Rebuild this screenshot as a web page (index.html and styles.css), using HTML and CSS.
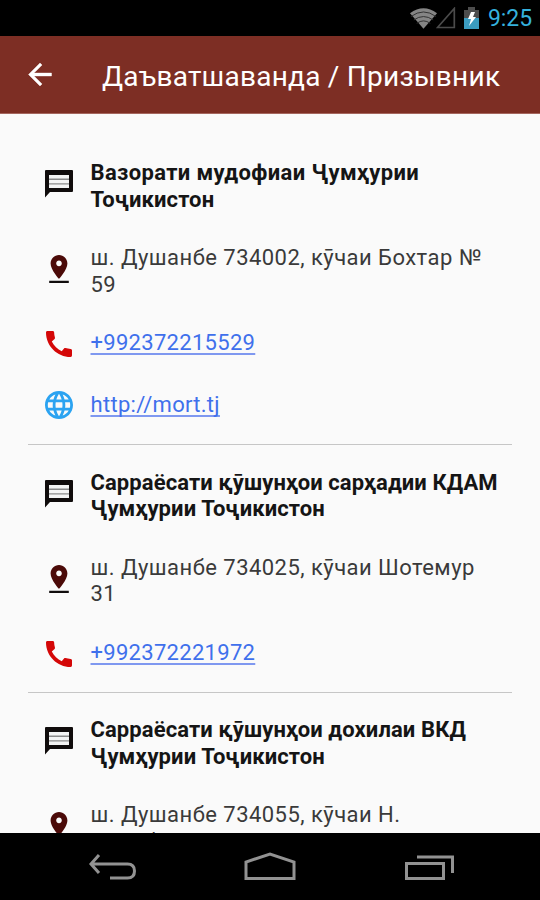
FILE: index.html
```
<!DOCTYPE html>
<html lang="tg">
<head>
<meta charset="utf-8">
<title>Даъватшаванда / Призывник</title>
<link rel="stylesheet" href="styles.css">
</head>
<body>
<svg class="defs" aria-hidden="true">
  <symbol id="message" viewBox="0 0 28 28"><path d="M1 0h26q1 0 1 1v20q0 1-1 1H5l-5 5.500V1q0-1 1-1z"/><path class="lines" d="M4 5h20v13H4z"/><path class="rules" d="M4 8.600h20v1.400H4zM4 13.200h20v1.400H4z"/></symbol>
  <symbol id="pin" viewBox="5 2 14 20"><path class="pin-mark" d="M18 8c0-3.310-2.690-6-6-6S6 4.690 6 8c0 4.500 6 11 6 11s6-6.500 6-11zm-8 0c0-1.100.9-2 2-2s2 .9 2 2-.89 2-2 2-2-.9-2-2z"/><path d="M5 20.400h14V22H5z"/></symbol>
  <symbol id="phone" viewBox="3 3 18 18"><path d="M20.010 15.380c-1.230 0-2.420-.2-3.530-.56-.35-.12-.74-.03-1.010.24l-1.570 1.970c-2.830-1.350-5.480-3.900-6.890-6.830l1.950-1.660c.27-.28.35-.67.24-1.020-.37-1.110-.56-2.300-.56-3.530 0-.54-.45-.99-.99-.99H4.190C3.650 3 3 3.240 3 3.990 3 13.280 10.730 21 20.010 21c.71 0 .99-.63.99-1.180v-3.450c0-.54-.45-.99-.99-.99z"/></symbol>
  <symbol id="globe" viewBox="2 2 20 20"><path d="M11.990 2C6.470 2 2 6.480 2 12s4.470 10 9.990 10C17.520 22 22 17.520 22 12S17.520 2 11.990 2zm6.930 6h-2.950c-.32-1.250-.78-2.450-1.380-3.560 1.840.63 3.370 1.910 4.330 3.560zM12 4.040c.83 1.200 1.480 2.530 1.910 3.960h-3.820c.43-1.430 1.080-2.760 1.910-3.960zM4.260 14C4.100 13.360 4 12.690 4 12s.1-1.360.26-2h3.380c-.08.66-.14 1.320-.14 2s.06 1.340.14 2H4.260zm.82 2h2.950c.32 1.250.78 2.450 1.380 3.560-1.840-.63-3.370-1.900-4.330-3.560zm2.950-8H5.080c.96-1.660 2.490-2.930 4.330-3.560C8.810 5.550 8.350 6.750 8.030 8zM12 19.960c-.83-1.200-1.480-2.530-1.910-3.960h3.820c-.43 1.430-1.080 2.760-1.910 3.960zM14.340 14H9.660c-.09-.66-.16-1.320-.16-2s.07-1.350.16-2h4.680c.09.65.16 1.320.16 2s-.07 1.340-.16 2zm.25 5.560c.6-1.110 1.060-2.310 1.380-3.560h2.950c-.96 1.650-2.490 2.930-4.330 3.560zM16.360 14c.08-.66.14-1.320.14-2s-.06-1.340-.14-2h3.380c.16.64.26 1.310.26 2s-.1 1.360-.26 2h-3.380z"/></symbol>
</svg>

<div class="screen">
  <div class="status">
    <svg class="wifi" viewBox="0 0 30 22"><path class="wedge" d="M1 6Q15-4 29 6L15 22z"/><path class="arcs" d="M2 9.500Q15 0 28 9.500M5 13q10-7 20 0M8 16.500q7-5 14 0"/></svg>
    <svg class="signal" viewBox="0 0 20 22"><path d="M18.300 1.500V20.500H1.500z"/></svg>
    <svg class="battery" viewBox="0 0 16 22"><path class="empty" d="M4 0h7v3h4v9H0V3h4z"/><path class="charge" d="M0 11h15v11H0z"/><path class="bolt" d="M7 5h4L9 10h3l-7 9 2-7H4z"/></svg>
    <span class="clock">9:25</span>
  </div>

  <header class="bar">
    <svg class="back" viewBox="4 4 16 16"><path d="M20 11H7.830l5.590-5.590L12 4l-8 8 8 8 1.410-1.410L7.830 13H20v-2z"/></svg>
    <h1 class="bar-title">Даъватшаванда / Призывник</h1>
  </header>

  <main class="list">
    <section class="group">
      <div class="row name"><svg class="icon message"><use href="#message"/></svg><p class="text"><span class="wide">Вазорати мудофиаи Ҷумҳурии</span><br>Тоҷикистон</p></div>
      <div class="row address"><svg class="icon pin"><use href="#pin"/></svg><p class="text">ш. Душанбе 734002, кӯчаи Бохтар №<br>59</p></div>
      <div class="row link"><svg class="icon phone"><use href="#phone"/></svg><p class="text"><a href="tel:+992372215529">+992372215529</a></p></div>
      <div class="row link"><svg class="icon globe"><use href="#globe"/></svg><p class="text"><a class="site" href="http://mort.tj">http://mort.tj</a></p></div>
    </section>
    <section class="group">
      <div class="row name"><svg class="icon message"><use href="#message"/></svg><p class="text">Сарраёсати қӯшунҳои сарҳадии КДАМ<br>Ҷумҳурии Тоҷикистон</p></div>
      <div class="row address"><svg class="icon pin"><use href="#pin"/></svg><p class="text">ш. Душанбе 734025, кӯчаи Шотемур<br>31</p></div>
      <div class="row link"><svg class="icon phone"><use href="#phone"/></svg><p class="text"><a href="tel:+992372221972">+992372221972</a></p></div>
    </section>
    <section class="group">
      <div class="row name"><svg class="icon message"><use href="#message"/></svg><p class="text">Сарраёсати қӯшунҳои дохилаи ВКД<br>Ҷумҳурии Тоҷикистон</p></div>
      <div class="row address"><svg class="icon pin"><use href="#pin"/></svg><p class="text">ш. Душанбе 734055, кӯчаи Н.<br>Қарабоев</p></div>
    </section>
  </main>

  <nav class="nav">
    <svg class="nav-icon" viewBox="0 0 52 32"><path d="M12 3L4 12l8 9M4 12h36.500q7 0 7 7t-7 7H23"/></svg>
    <svg class="nav-icon" viewBox="0 0 52 32"><path d="M2 26.500V10L26 2l24 8v16.500z"/></svg>
    <svg class="nav-icon" viewBox="0 0 52 32"><path d="M2.500 11.500h37v15h-37zM13 5h35.500v16"/></svg>
  </nav>
</div>
</body>
</html>
```
FILE: styles.css
```
* { box-sizing: border-box; }
body { margin: 0; font-family: Roboto, "Noto Sans", sans-serif; }
h1, p { margin: 0; }
.defs { display: none; }
.screen {
  width: 540px;
  height: 900px;
  display: flex;
  flex-direction: column;
  overflow: hidden;
  background: #fafafa;
}

.status {
  flex: none;
  height: 36px;
  padding: 0 8px 0 0;
  display: flex;
  align-items: center;
  justify-content: flex-end;
  background: #000;
}
.wifi { width: 29px; height: 22px; margin-right: -2px; }
.wedge { fill: #858585; }
.arcs { fill: none; stroke: #303030; stroke-width: 1; }
.signal { width: 20px; height: 22px; margin-right: 8px; }
.signal path { fill: none; stroke: #4b4b4b; stroke-width: 1.7; }
.battery { width: 16px; height: 22px; margin-right: 8px; }
.empty { fill: #4d4d4d; }
.charge { fill: #3b9cc0; }
.bolt { fill: #fff; }
.clock { font-size: 23px; line-height: 34px; padding-top: 2px; color: #35b1dd; letter-spacing: -.1px; }

.bar {
  flex: none;
  height: 78px;
  padding-left: 28px;
  display: flex;
  align-items: center;
  background: #7d2e24;
  border-bottom: 1px solid #a4665e;
}
.back { width: 24px; height: 23px; margin-right: 50px; fill: #fff; stroke: #fff; stroke-width: .3; }
.bar-title { font-size: 28px; line-height: 36px; font-weight: 400; color: #fff; white-space: nowrap; padding-top: 5px; letter-spacing: .24px; }

.list { flex: 1; min-height: 0; overflow: hidden; padding: 36px 28px 0; }
.group { border-bottom: 1px solid #c6c6c6; margin-bottom: 14.5px; }
.row { display: flex; height: 85px; padding: 10px 0 0 17px; }
.row.link { height: 62px; }
.icon { flex: none; width: 28px; height: 28px; margin: 10px 17.5px 0 0; fill: #100c0c; }
.lines { fill: #f4f4f4; }
.rules { fill: #8a8a8a; }
.pin { width: 20px; margin: 10px 21.5px 0 4px; }
.pin-mark { fill: #4b0a08; }
.phone { width: 26px; height: 26px; margin: 1px 18.5px 0 1px; fill: #d40707; }
.globe { margin-top: -1px; fill: #2ba3f1; }
.text { font-size: 22px; line-height: 26.5px; letter-spacing: .3px; color: #2b2b2b; white-space: nowrap; }
.name .text { font-weight: 700; color: #151515; letter-spacing: .1px; }
.name .wide { letter-spacing: .36px; }
.address .text { font-weight: 400; color: #3a3a3a; letter-spacing: .46px; }
.text a { color: #3f70ec; text-decoration-color: #7f98f0; text-decoration-thickness: 2px; text-underline-offset: 3px; text-decoration-skip-ink: none; }

.nav {
  flex: none;
  height: 67px;
  padding: 3px 84px 0 87px;
  display: flex;
  align-items: center;
  justify-content: space-between;
  background: #000;
}
.nav-icon { width: 52px; height: 32px; fill: none; stroke: #929292; stroke-width: 3; }
.nav-icon:nth-child(2) { margin-right: 3px; }
```
